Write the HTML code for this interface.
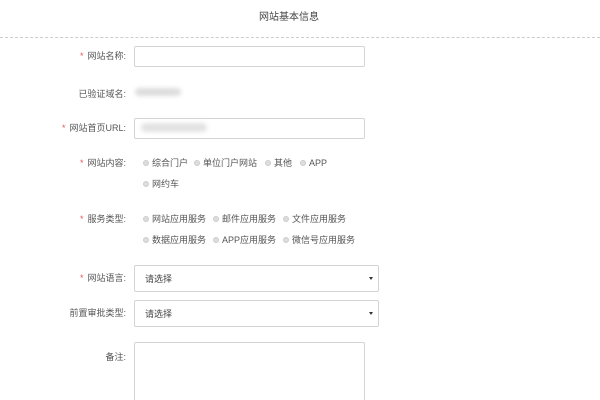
<!DOCTYPE html>
<html style="height:400px;overflow:hidden"><head><meta charset="utf-8"><style>
html,body{margin:0;height:400px;overflow:hidden}
body{width:600px;background:#fff;position:relative;font-family:"Liberation Sans","Noto Sans CJK SC",sans-serif;font-size:9px;color:#555}
.a{position:absolute;white-space:nowrap;line-height:12px}
.l{position:absolute;right:474px;white-space:nowrap;line-height:12px;color:#555}
.l b{color:#e05a5a;font-weight:normal;margin-right:4px}
.in{position:absolute;border:1px solid #d4d4d4;border-radius:2px;background:#fff;box-sizing:border-box}
.r{position:absolute;white-space:nowrap;line-height:12px}
.r i{display:inline-block;width:6px;height:6px;border-radius:50%;background:#ddd;border:1px solid #ccc;box-sizing:border-box;margin-right:3px;vertical-align:-0px}
.arr{position:absolute;right:5px;top:11px;width:0;height:0;border-left:2px solid transparent;border-right:2px solid transparent;border-top:3px solid #333}
</style></head><body>
<div class="a" style="left:259px;top:12px;font-size:10px;color:#444">网站基本信息</div>
<div style="position:absolute;left:0;right:0;top:37px;border-top:1px dashed #ccc"></div>

<div class="l" style="top:50px"><b>*</b>网站名称:</div>
<div class="in" style="left:134px;top:46px;width:231px;height:21px"></div>

<div class="l" style="top:88px">已验证域名:</div>
<div style="position:absolute;left:135px;top:88px;width:46px;height:8px;border-radius:4px;background:#ddd;filter:blur(2px)"></div>

<div class="l" style="top:122px"><b>*</b>网站首页URL:</div>
<div class="in" style="left:134px;top:118px;width:231px;height:21px"></div>
<div style="position:absolute;left:141px;top:123px;width:66px;height:9px;border-radius:5px;background:#e2e2e2;filter:blur(2px)"></div>

<div class="l" style="top:157px"><b>*</b>网站内容:</div>
<div class="r" style="left:143px;top:157px"><i></i>综合门户</div>
<div class="r" style="left:194px;top:157px"><i></i>单位门户网站</div>
<div class="r" style="left:265px;top:157px"><i></i>其他</div>
<div class="r" style="left:300px;top:157px"><i></i>APP</div>
<div class="r" style="left:143px;top:178px"><i></i>网约车</div>

<div class="l" style="top:213px"><b>*</b>服务类型:</div>
<div class="r" style="left:143px;top:213px"><i></i>网站应用服务</div>
<div class="r" style="left:213px;top:213px"><i></i>邮件应用服务</div>
<div class="r" style="left:283px;top:213px"><i></i>文件应用服务</div>
<div class="r" style="left:143px;top:234px"><i></i>数据应用服务</div>
<div class="r" style="left:213px;top:234px"><i></i>APP应用服务</div>
<div class="r" style="left:283px;top:234px"><i></i>微信号应用服务</div>

<div class="l" style="top:272px"><b>*</b>网站语言:</div>
<div class="in" style="left:134px;top:265px;width:245px;height:27px"><span class="a" style="left:10px;top:7px;color:#444">请选择</span><div class="arr"></div></div>

<div class="l" style="top:307px">前置审批类型:</div>
<div class="in" style="left:134px;top:300px;width:245px;height:27px"><span class="a" style="left:10px;top:7px;color:#444">请选择</span><div class="arr"></div></div>

<div class="l" style="top:351px">备注:</div>
<div class="in" style="left:134px;top:342px;width:231px;height:58px;border-bottom:none;border-radius:2px 2px 0 0"></div>
</body></html>
